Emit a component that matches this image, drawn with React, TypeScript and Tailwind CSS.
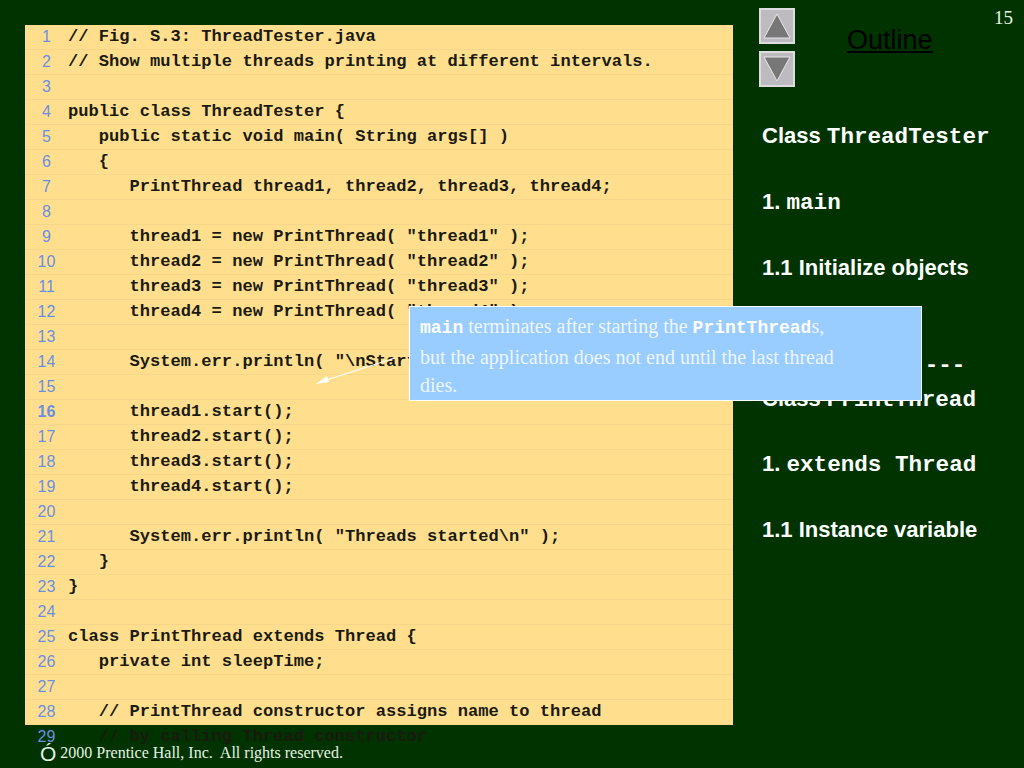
const code = [
  "// Fig. S.3: ThreadTester.java",
  "// Show multiple threads printing at different intervals.",
  "",
  "public class ThreadTester {",
  "   public static void main( String args[] )",
  "   {",
  "      PrintThread thread1, thread2, thread3, thread4;",
  "",
  '      thread1 = new PrintThread( "thread1" );',
  '      thread2 = new PrintThread( "thread2" );',
  '      thread3 = new PrintThread( "thread3" );',
  '      thread4 = new PrintThread( "thread4" );',
  "",
  '      System.err.println( "\\nStarting threads" );',
  "",
  "      thread1.start();",
  "      thread2.start();",
  "      thread3.start();",
  "      thread4.start();",
  "",
  '      System.err.println( "Threads started\\n" );',
  "   }",
  "}",
  "",
  "class PrintThread extends Thread {",
  "   private int sleepTime;",
  "",
  "   // PrintThread constructor assigns name to thread",
  "   // by calling Thread constructor",
];

const mono = "font-['Liberation_Mono',monospace] font-bold";

function NavButton({ up }: { up?: boolean }) {
  return (
    <div className="w-[36px] h-[36px] bg-[#bdbbc0] border-2 border-[#dddcdf]">
      <svg width="32" height="32" viewBox="0 0 32 32">
        {up ? (
          <polygon points="16,4 29,28 3,28" fill="#777777" stroke="#e6e6e6" strokeWidth="1" />
        ) : (
          <polygon points="3,4 29,4 16,28" fill="#777777" stroke="#e6e6e6" strokeWidth="1" />
        )}
      </svg>
    </div>
  );
}

export default function App() {
  return (
    <div className="relative w-[1024px] h-[768px] overflow-hidden flex bg-[#003300] font-['Liberation_Sans',sans-serif]">
      <div className="w-[733px] pl-[25px] pt-[25px] flex flex-col">
        <div className="w-[708px] h-[700px] flex flex-col bg-[#ffdf8e]">
          {code.map((line, i) => (
            <div
              key={i}
              className={`flex-1 flex items-center ${i < 28 ? "border-b border-[#f6d68a]" : ""}`}
            >
              <span
                className={`w-[43px] text-center text-[16px] text-[#6a8fe0] ${i === 15 ? "font-bold text-[#4a6fc0]" : ""}`}
              >
                {i + 1}
              </span>
              <span className={`${mono} text-[17.1px] leading-none whitespace-pre text-[#1a1a10]`}>{line}</span>
            </div>
          ))}
        </div>
        <div className="mt-[15px] pl-[15px] flex items-center gap-[4px] text-[#e6f2e6] h-[26px]">
          <span className="text-[21px] leading-none">Ó</span>
          <span className="font-['Liberation_Serif',serif] text-[16px] whitespace-pre">
            2000 Prentice Hall, Inc.  All rights reserved.
          </span>
        </div>
      </div>

      <div className="flex-1 flex flex-col pl-[29px]">
        <div className="flex h-[125px]">
          <div className="flex flex-col gap-[7px] pt-[8px] -ml-[3px]">
            <NavButton up />
            <NavButton />
          </div>
          <div className="ml-[52px] pt-[23px] text-[27px] leading-[34px] underline text-black">Outline</div>
          <div className="ml-auto mr-[11px] pt-[6px] font-['Liberation_Serif',serif] text-[19px] leading-[24px] text-[#e6f2e6]">
            15
          </div>
        </div>

        <div className="flex flex-col text-white font-bold text-[22px] whitespace-pre">
          <div className="h-[66px] leading-[22px]">
            Class <span className={`${mono} text-[22.6px]`}>ThreadTester</span>
          </div>
          <div className="h-[66px] leading-[22px]">
            1. <span className={`${mono} text-[22.6px]`}>main</span>
          </div>
          <div className="h-[97px] leading-[22px]">1.1 Initialize objects</div>
          <div className={`h-[34px] leading-[22px] ${mono} text-[22.6px]`}>---------------</div>
          <div className="h-[65px] leading-[22px]">
            Class <span className={`${mono} text-[22.6px]`}>PrintThread</span>
          </div>
          <div className="h-[66px] leading-[22px]">
            1. <span className={`${mono} text-[22.6px]`}>extends Thread</span>
          </div>
          <div className="leading-[22px]">1.1 Instance variable</div>
        </div>
      </div>

      <svg className="absolute left-[310px] top-[350px]" width="95" height="40" viewBox="0 0 95 40">
        <line x1="85" y1="8" x2="10" y2="32" stroke="#ffffff" strokeWidth="1.2" />
        <polygon points="6,34 17,26 19,32" fill="#ffffff" />
      </svg>

      <div className="absolute left-[409px] top-[306px] w-[513px] h-[95px] bg-[#99ccff] border border-white pl-[10px] pt-[5px] font-['Liberation_Serif',serif] text-[20px] leading-[28.5px] text-[#eef6ff] whitespace-pre">
        <div>
          <span className={`${mono} text-[18px] text-white`}>main</span> terminates after starting the{" "}
          <span className={`${mono} text-[18px] text-white`}>PrintThread</span>s,
        </div>
        <div>but the application does not end until the last thread</div>
        <div>dies.</div>
      </div>
    </div>
  );
}
